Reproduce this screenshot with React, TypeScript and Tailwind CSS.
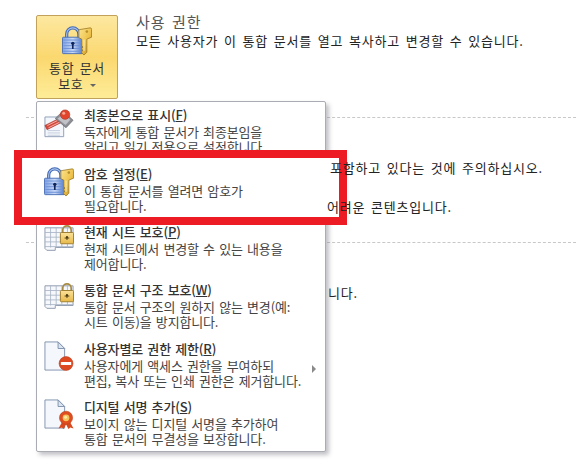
const KR = "font-['Noto_Sans_CJK_KR','Noto_Sans',sans-serif]"

function LockKey({ id }: { id: string }) {
  return (
    <svg width="30" height="31" viewBox="0 0 32 32" className="shrink-0">
      <defs>
        <linearGradient id={`body-${id}`} x1="0" y1="0" x2="1" y2="0">
          <stop offset="0" stopColor="#7fa3e6" />
          <stop offset="0.5" stopColor="#c9daf6" />
          <stop offset="1" stopColor="#4a74c6" />
        </linearGradient>
        <linearGradient id={`key-${id}`} x1="0" y1="0" x2="1" y2="1">
          <stop offset="0" stopColor="#fbe48f" />
          <stop offset="0.55" stopColor="#eec24a" />
          <stop offset="1" stopColor="#b07f18" />
        </linearGradient>
      </defs>
      <path d="M5 14V9a6.5 6.5 0 0 1 13 0v5" fill="none" stroke="#3f68b4" strokeWidth="3.4" />
      <path d="M5 14V9a6.5 6.5 0 0 1 13 0v5" fill="none" stroke="#a9c2ee" strokeWidth="1.2" />
      <rect x="0.5" y="12.5" width="22" height="17.5" rx="1" fill={`url(#body-${id})`} stroke="#4a6fb5" />
      <path d="M1.5 15.5h20M1.5 18.5h20M1.5 21.5h20M1.5 24.5h20M1.5 27.5h20" stroke="#6d90d6" strokeWidth="1" />
      <circle cx="11.5" cy="19" r="1.8" fill="#10265a" />
      <rect x="10.6" y="19" width="1.8" height="6" fill="#10265a" />
      <path d="M18 4.5 30 2.5a1.5 1.5 0 0 1 1.5 1.5v8.5l-5 2v14l-3 3-2.5-2.5v-1.5l1.5-1-1.5-1v-1.5l1.5-1-1.5-1v-7.5l-3-1.5z" fill={`url(#key-${id})`} stroke="#96731f" strokeWidth="0.8" />
      <path d="M23.5 15v12" stroke="#fff3c4" strokeWidth="1" />
      <circle cx="26.5" cy="6.5" r="1.4" fill="#b98f2e" />
    </svg>
  )
}

function Stamp() {
  return (
    <svg width="30" height="30" viewBox="0 0 32 32" className="shrink-0">
      <path d="M1 8.5h13l7 0v21H1z" fill="#f3f6fb" stroke="#8d9db5" />
      <path d="M4 23h13M4 25.5h13M4 28h13" stroke="#c4cedd" />
      <path d="M1 17.5 18 9l2.2 4.5L3.2 22z" fill="#d8483a" stroke="#a32b20" strokeWidth="0.6" />
      <path d="M3.6 17.6 17 11M4.8 20 18.4 13.2" stroke="#f6c9c2" strokeWidth="0.9" />
      <path d="M12 10 20.5 2 31 12l-7.5 8z" fill="#8d8f96" stroke="#5f6168" strokeWidth="0.7" />
      <path d="M14.5 10.5 21 4.5l7 7-5 5.5z" fill="#c0c2c8" />
      <circle cx="22.5" cy="6" r="5" fill="#e2452c" stroke="#b3321d" strokeWidth="0.7" />
      <circle cx="21" cy="4.5" r="1.6" fill="#f8a78f" />
    </svg>
  )
}

function GridLock({ id }: { id: string }) {
  return (
    <svg width="30" height="30" viewBox="0 0 32 32" className="shrink-0">
      <defs>
        <linearGradient id={`gold-${id}`} x1="0" y1="0" x2="0" y2="1">
          <stop offset="0" stopColor="#fbe39a" />
          <stop offset="1" stopColor="#e7b84a" />
        </linearGradient>
      </defs>
      <path d="M1 3h30v21H12v3H3l-2-2z" fill="#f6f8fb" stroke="#8b98ad" />
      <path d="M1 8h30M1 13h30M1 18h30M1 23h30M7 3v21M13 3v21M19 3v21M25 3v21" stroke="#a9b4c6" strokeWidth="0.9" />
      <path d="M20 8V5.5a4.5 4.5 0 0 1 9 0V8" fill="none" stroke="#a88a3e" strokeWidth="1.8" />
      <rect x="17.5" y="8" width="14" height="12" rx="1" fill={`url(#gold-${id})`} stroke="#9d7c2c" />
      <circle cx="24.5" cy="13" r="1.2" fill="#4a3a10" />
      <rect x="22" y="13.4" width="5" height="1" fill="#4a3a10" />
      <rect x="24" y="13" width="1" height="3" fill="#4a3a10" />
    </svg>
  )
}

function Doc({ children }: { children: React.ReactNode }) {
  return (
    <svg width="30" height="30" viewBox="0 0 32 32" className="shrink-0">
      <path d="M1 1h14l7 7v23H1z" fill="#f4f7fc" stroke="#7f92ad" />
      <path d="M15 1v7h7z" fill="#dbe4f1" stroke="#7f92ad" />
      {children}
    </svg>
  )
}

function DocDeny() {
  return (
    <Doc>
      <circle cx="23.5" cy="24" r="7.4" fill="#dd4a22" stroke="#b5391a" strokeWidth="0.6" />
      <rect x="18" y="22.4" width="11" height="3.2" fill="#fff" />
    </Doc>
  )
}

function DocRibbon() {
  return (
    <Doc>
      <path d="M19 25l-3.5 6.5 3.5-1 2 1.5 2.5-5 2.5 5 2-1.5 3.5 1L28 25z" fill="#d8491f" />
      <circle cx="23.5" cy="20" r="7" fill="#df4d20" stroke="#b83c16" strokeWidth="0.6" />
      <circle cx="23.5" cy="20" r="3.6" fill="#f6c35a" />
      <circle cx="23" cy="19.5" r="1.6" fill="#fde9a8" />
    </Doc>
  )
}

function MenuRow({ icon, iconTop, title, hotkey, lines, arrow }: {
  icon: React.ReactNode
  iconTop: string
  title: string
  hotkey: string
  lines: string[]
  arrow?: boolean
}) {
  return (
    <div className="relative flex h-[58.4px] gap-[10px] pl-[7px]">
      <div className={iconTop}>{icon}</div>
      <div className="text-[#444] text-[13px] leading-[15px] tracking-[-0.15px] [word-spacing:1.5px]">
        <div className="font-medium text-[#333] mb-[2px] whitespace-nowrap">
          {title}(<span className="underline">{hotkey}</span>)
        </div>
        {lines.map((l) => (
          <div key={l} className="whitespace-nowrap">{l}</div>
        ))}
      </div>
      {arrow && (
        <div className="absolute right-[9px] top-[24px] border-y-[4px] border-l-[4px] border-y-transparent border-l-[#8a8a8a]" />
      )}
    </div>
  )
}

export default function App() {
  return (
    <div className={`relative w-[582px] h-[475px] overflow-hidden bg-white text-[#222] ${KR}`}>
      {/* backstage sections */}
      <div className="flex h-[117px] pl-[36px] pt-[15px] gap-[18px]">
        <div className="w-[82px] h-[84px] rounded-[2px] border border-[#c2a25a] bg-gradient-to-b from-[#fde8a0] via-[#fbd86f] to-[#fdec97] flex flex-col items-center pt-[9px]">
          <LockKey id="btn" />
          <div className="mt-[4px] text-[13px] leading-[16px] tracking-[0.6px] [word-spacing:2px] text-[#333] text-center">
            <div>통합 문서</div>
            <div>보호 <span className="inline-block align-middle ml-[1px] border-x-[3px] border-t-[3px] border-x-transparent border-t-[#666]" /></div>
          </div>
        </div>
        <div className="-mt-[2px]">
          <div className="text-[15px] leading-[18px] tracking-[1px] [word-spacing:2px] text-[#555]">사용 권한</div>
          <div className="mt-[2px] text-[13px] leading-[16px] tracking-[0.8px] [word-spacing:2px] whitespace-nowrap">모든 사용자가 이 통합 문서를 열고 복사하고 변경할 수 있습니다.</div>
        </div>
      </div>
      <div className="ml-[26px] mr-[6px] border-t border-dashed border-[#c8c8c8]" />
      <div className="relative z-30 h-[124px] pl-[330px] pt-[42px] text-[13px] leading-[16px] tracking-[0.8px] [word-spacing:2px]">
        <div className="whitespace-nowrap">포함하고 있다는 것에 주의하십시오.</div>
        <div className="mt-[23px] -ml-[3px] whitespace-nowrap">어려운 콘텐츠입니다.</div>
      </div>
      <div className="ml-[26px] mr-[6px] border-t border-dashed border-[#c8c8c8]" />
      <div className="pl-[328px] pt-[42px] text-[13px] leading-[16px] tracking-[0.8px]">니다.</div>

      {/* dropdown menu */}
      <div className="absolute left-[36px] top-[101px] z-10 w-[290px] h-[351px] pt-[5px] bg-white rounded-[2px] border border-[#a9acb2] shadow-[3px_3px_4px_rgba(120,120,130,0.45)]">
        <MenuRow
          icon={<Stamp />}
          iconTop="pt-[2px]"
          title="최종본으로 표시"
          hotkey="F"
          lines={['독자에게 통합 문서가 최종본임을', '알리고 읽기 전용으로 설정합니다.']}
        />
        <div className="h-[58.4px]" />
        <MenuRow
          icon={<GridLock id="a" />}
          iconTop="pt-[1px]"
          title="현재 시트 보호"
          hotkey="P"
          lines={['현재 시트에서 변경할 수 있는 내용을', '제어합니다.']}
        />
        <MenuRow
          icon={<GridLock id="b" />}
          iconTop="pt-[1px]"
          title="통합 문서 구조 보호"
          hotkey="W"
          lines={['통합 문서 구조의 원하지 않는 변경(예:', '시트 이동)을 방지합니다.']}
        />
        <MenuRow
          icon={<DocDeny />}
          iconTop="pt-0"
          title="사용자별로 권한 제한"
          hotkey="R"
          lines={['사용자에게 액세스 권한을 부여하되', '편집, 복사 또는 인쇄 권한은 제거합니다.']}
          arrow
        />
        <MenuRow
          icon={<DocRibbon />}
          iconTop="pt-0"
          title="디지털 서명 추가"
          hotkey="S"
          lines={['보이지 않는 디지털 서명을 추가하여', '통합 문서의 무결성을 보장합니다.']}
        />
      </div>

      {/* red callout pasted over the menu */}
      <div className="absolute left-[14px] top-[150px] z-20 w-[333px] h-[75px] border-[8px] border-[#ed1c24] bg-white pl-[15px] pt-[8px]">
        <MenuRow
          icon={<LockKey id="item" />}
          iconTop="pt-0"
          title="암호 설정"
          hotkey="E"
          lines={['이 통합 문서를 열려면 암호가', '필요합니다.']}
        />
      </div>
    </div>
  )
}
